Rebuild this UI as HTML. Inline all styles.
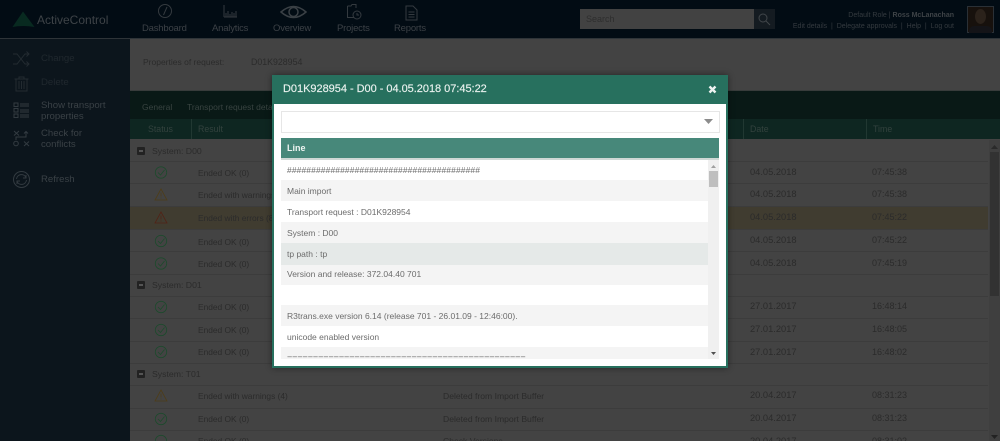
<!DOCTYPE html>
<html><head><meta charset="utf-8">
<style>
html,body{margin:0;padding:0;width:1000px;height:441px;overflow:hidden;background:#434343;font-family:"Liberation Sans",sans-serif;}
.a{position:absolute;white-space:nowrap;}
.t{position:absolute;white-space:nowrap;font-size:8.4px;line-height:12px;color:#2b2b2b;filter:blur(.25px);}
.d{font-size:9.3px;}
.nav{position:absolute;white-space:nowrap;font-size:9.5px;line-height:14px;top:22px;color:#3c4146;letter-spacing:-.2px;}
.sb{position:absolute;white-space:nowrap;font-size:9.6px;line-height:10.5px;color:#3a4146;}
.sep{position:absolute;left:130px;width:858px;height:1px;background:#3c3c3c;}
.m{position:absolute;left:287px;white-space:nowrap;font-size:8.5px;line-height:12px;color:#6c6c6c;}
svg{position:absolute;overflow:visible;}
</style></head><body>
<div style="position:relative;width:1000px;height:441px;overflow:hidden;background:#434343">

<!-- header -->
<div class="a" style="left:0;top:0;width:1000px;height:38px;background:#020c14"></div>
<div class="a" style="left:0;top:38px;width:1000px;height:1px;background:#2e3438"></div>
<svg style="left:12px;top:11px" width="23" height="17"><path d="M11 0.5 L22.5 16 Q11 14 0.5 16 Z" fill="#082a20"/></svg>
<div class="a" style="left:37px;top:12px;font-size:12px;line-height:16px;color:#3e4347">ActiveControl</div>
<svg style="left:157px;top:3px" width="18" height="18" fill="none" stroke="#343a3f" stroke-width="1"><circle cx="8" cy="8" r="6.5" fill="none"/><path fill="none" d="M10 4 L6.5 12"/></svg>
<svg style="left:223px;top:4px" width="16" height="16" fill="none" stroke="#343a3f" stroke-width="1"><path fill="none" d="M1 1V13M1 13H14M3 13V9M5 13V7M7 13V10M9 13V8M11 13V9M13 13V7"/></svg>
<svg style="left:280px;top:4px" width="27" height="16" fill="none" stroke="#3a4045" stroke-width="1.5"><path fill="none" d="M1 8 Q13.500 -3 26 8 Q13.500 19 1 8 Z"/><circle cx="13.500" cy="8" r="4.500" fill="none"/></svg>
<svg style="left:346px;top:3px" width="17" height="18" fill="none" stroke="#343a3f" stroke-width="1"><path fill="none" d="M1.500 3H5L6 1.500H10V5M1.500 3V14.500H8"/><circle cx="11" cy="12" r="4" fill="none"/><path fill="none" d="M11 10V12H13"/></svg>
<svg style="left:405px;top:5px" width="13" height="16" fill="none" stroke="#343a3f" stroke-width="1"><path fill="none" d="M1 1H8L12 5V15H1ZM3.500 7H9.500M3.500 9.500H9.500M3.500 12H9.500"/></svg>
<div class="nav" style="left:142px">Dashboard</div>
<div class="nav" style="left:212px">Analytics</div>
<div class="nav" style="left:273px">Overview</div>
<div class="nav" style="left:337px">Projects</div>
<div class="nav" style="left:394px">Reports</div>

<div class="a" style="left:580px;top:9px;width:174px;height:20px;background:#424242"></div>
<div class="a" style="left:586px;top:13px;font-size:9px;line-height:12px;color:#2e2e2e">Search</div>
<div class="a" style="left:754px;top:9px;width:21px;height:20px;background:#141b21"></div>
<svg style="left:758px;top:13px" width="13" height="13" fill="none" stroke="#41464a" stroke-width="1"><circle cx="5" cy="5" r="4" fill="none"/><path fill="none" d="M8 8L12 12"/></svg>
<div class="a" style="right:46px;top:10px;font-size:7px;line-height:11px;color:#343a3f">Default Role | <b style="color:#3e4347">Ross McLanachan</b></div>
<div class="a" style="right:46px;top:21px;font-size:7px;line-height:11px;color:#343a3f">Edit details &nbsp;|&nbsp; Delegate approvals &nbsp;|&nbsp; Help &nbsp;|&nbsp; Log out</div>
<div class="a" style="left:967px;top:6px;width:27px;height:27px;background:#17110d;outline:1px solid #2a3036;outline-offset:-1px;overflow:hidden">
<div class="a" style="left:8px;top:3px;width:11px;height:15px;border-radius:50%;background:#2b221b"></div>
<div class="a" style="left:2px;top:20px;width:23px;height:8px;background:#141418;border-radius:5px 5px 0 0"></div>
</div>

<!-- sidebar -->
<div class="a" style="left:0;top:39px;width:130px;height:402px;background:#0c151c"></div>
<svg style="left:13px;top:51px" width="17" height="16" fill="none" stroke="#232b31" stroke-width="1"><path fill="none" d="M0 3H4L12 13H16M0 13H4L12 3H16M13.500 0.500L16 3L13.500 5.500M13.500 10.500L16 13L13.500 15.500"/></svg>
<svg style="left:14px;top:76px" width="15" height="16" fill="none" stroke="#232b31" stroke-width="1"><path fill="none" d="M0.500 3H14.500M5 3V1H10V3M2 3V15H13V3M5 5V13M7.500 5V13M10 5V13"/></svg>
<svg style="left:13px;top:102px" width="17" height="16" fill="none" stroke="#333b41" stroke-width="1"><path fill="none" d="M1 1H5V4.500H1ZM1 6.500H5V10H1ZM1 12H5V15.500H1ZM7 2H16M7 4H16M7 8H16M7 10H16M7 13H16M7 15H16"/></svg>
<svg style="left:13px;top:130px" width="17" height="18" fill="none" stroke="#333b41" stroke-width="1"><path fill="none" d="M1 1L6 5.500M6 1L1 5.500M11 16L16 11.500M16 16L11 11.500M3 10V7H13V1.500M11 3.500L13 1.500L15 3.500"/><circle cx="3" cy="13.500" r="2.300" fill="none"/></svg>
<svg style="left:13px;top:171px" width="17" height="17" fill="none" stroke="#333b41" stroke-width="1"><circle cx="8.500" cy="8.500" r="8" fill="none"/><path fill="none" d="M3.500 8A5 5 0 0 1 13 6.500M13.500 9A5 5 0 0 1 4 10.500M13 4V7H10M4 13V10H7"/></svg>
<div class="sb" style="left:41px;top:54px;color:#20282e">Change</div>
<div class="sb" style="left:41px;top:78px;color:#20282e">Delete</div>
<div class="sb" style="left:41px;top:101px">Show transport<br>properties</div>
<div class="sb" style="left:41px;top:129px">Check for<br>conflicts</div>
<div class="sb" style="left:41px;top:175px">Refresh</div>

<!-- page head -->
<div class="t" style="left:143px;top:56px;font-size:8.5px">Properties of request:</div>
<div class="t" style="left:251px;top:56px;font-size:8.8px">D01K928954</div>
<div class="a" style="left:130px;top:90px;width:870px;height:1px;background:#383c3b"></div>
<div class="a" style="left:130px;top:91px;width:870px;height:28px;background:#091916"></div>
<div class="t" style="left:142px;top:101px;color:#384340;font-size:8.5px">General</div>
<div class="t" style="left:187px;top:101px;color:#384340;font-size:8.5px">Transport request details</div>
<div class="a" style="left:130px;top:119px;width:870px;height:20px;background:#0e2621"></div>
<div class="a" style="left:191px;top:119px;width:1px;height:20px;background:#213832"></div>
<div class="a" style="left:743px;top:119px;width:1px;height:20px;background:#213832"></div>
<div class="a" style="left:866px;top:119px;width:1px;height:20px;background:#213832"></div>
<div class="t" style="left:148px;top:123px;color:#33423e;font-size:8.8px">Status</div>
<div class="t" style="left:198px;top:123px;color:#33423e;font-size:8.8px">Result</div>
<div class="t" style="left:750px;top:123px;color:#33423e;font-size:8.8px">Date</div>
<div class="t" style="left:873px;top:123px;color:#33423e;font-size:8.8px">Time</div>

<!-- table -->
<div class="a" style="left:130px;top:207px;width:858px;height:22px;background:#403c30"></div>
<div class="a" style="left:989px;top:140px;width:11px;height:301px;background:#3f3f3f"></div>
<div class="a" style="left:990px;top:152px;width:9px;height:144px;background:#323232"></div>
<svg style="left:991px;top:145px" width="7" height="4"><path d="M0 4L3.500 0L7 4Z" fill="#2a2a2a"/></svg>
<svg style="left:991px;top:435px" width="7" height="4"><path d="M0 0L3.500 4L7 0Z" fill="#222"/></svg>

<div class="sep" style="top:161px"></div><div class="sep" style="top:183px"></div><div class="sep" style="top:206px"></div><div class="sep" style="top:229px"></div><div class="sep" style="top:251px"></div><div class="sep" style="top:274px"></div><div class="sep" style="top:296px"></div><div class="sep" style="top:318px"></div><div class="sep" style="top:341px"></div><div class="sep" style="top:363px"></div><div class="sep" style="top:385px"></div><div class="sep" style="top:408px"></div><div class="sep" style="top:430px"></div>

<div class="a" style="left:137px;top:147px;width:8px;height:8px;background:#222;border-radius:1px"></div><div class="a" style="left:139px;top:150px;width:4px;height:2px;background:#555"></div>
<div class="a" style="left:137px;top:281px;width:8px;height:8px;background:#222;border-radius:1px"></div><div class="a" style="left:139px;top:284px;width:4px;height:2px;background:#555"></div>
<div class="a" style="left:137px;top:370px;width:8px;height:8px;background:#222;border-radius:1px"></div><div class="a" style="left:139px;top:373px;width:4px;height:2px;background:#555"></div>
<div class="t" style="left:152px;top:145px;font-size:8.7px">System: D00</div>
<div class="t" style="left:152px;top:279px;font-size:8.7px">System: D01</div>
<div class="t" style="left:152px;top:368px;font-size:8.7px">System: T01</div>

<svg style="left:0;top:0" width="1000" height="441">
<g stroke="#1c4a2c" stroke-width=".8" fill="none">
<circle fill="none" cx="161" cy="172.500" r="5.700"/><path fill="none" d="M158 172.500L160.500 175L164.500 170"/>
<circle fill="none" cx="161" cy="241" r="5.700"/><path fill="none" d="M158 241L160.500 243.500L164.500 238.500"/>
<circle fill="none" cx="161" cy="263.500" r="5.700"/><path fill="none" d="M158 263.500L160.500 266L164.500 261"/>
<circle fill="none" cx="161" cy="307" r="5.700"/><path fill="none" d="M158 307L160.500 309.500L164.500 304.500"/>
<circle fill="none" cx="161" cy="330" r="5.700"/><path fill="none" d="M158 330L160.500 332.500L164.500 327.500"/>
<circle fill="none" cx="161" cy="352" r="5.700"/><path fill="none" d="M158 352L160.500 354.500L164.500 349.500"/>
<circle fill="none" cx="161" cy="419" r="5.700"/><path fill="none" d="M158 419L160.500 421.500L164.500 416.500"/>
<circle fill="none" cx="161" cy="441" r="5.700"/>
</g>
<g stroke="#4e3d18" stroke-width=".8" fill="none">
<path fill="none" d="M161 189L167 200H155Z"/><path fill="none" d="M161 192.500V196.500M161 197.500V198.500"/>
<path fill="none" d="M161 390L167 401H155Z"/><path fill="none" d="M161 393.500V397.500M161 398.500V399.500"/>
</g>
<g stroke="#522316" stroke-width=".8" fill="none">
<path fill="none" d="M161 212L167 223H155Z"/><path fill="none" d="M161 215.500V219.500M161 220.500V221.500"/>
</g>
</svg>

<div class="t" style="left:198px;top:167px">Ended OK (0)</div>
<div class="t" style="left:198px;top:189px">Ended with warnings (4)</div>
<div class="t" style="left:198px;top:212px">Ended with errors (8)</div>
<div class="t" style="left:198px;top:236px">Ended OK (0)</div>
<div class="t" style="left:198px;top:258px">Ended OK (0)</div>
<div class="t" style="left:198px;top:301px">Ended OK (0)</div>
<div class="t" style="left:198px;top:324px">Ended OK (0)</div>
<div class="t" style="left:198px;top:346px">Ended OK (0)</div>
<div class="t" style="left:198px;top:390px">Ended with warnings (4)</div>
<div class="t" style="left:198px;top:413px">Ended OK (0)</div>
<div class="t" style="left:198px;top:435px">Ended OK (0)</div>
<div class="t" style="left:443px;top:390px;font-size:8.6px">Deleted from Import Buffer</div>
<div class="t" style="left:443px;top:413px;font-size:8.6px">Deleted from Import Buffer</div>
<div class="t" style="left:443px;top:435px;font-size:8.6px">Check Versions</div>

<div class="t d" style="left:750px;top:166px">04.05.2018</div><div class="t" style="left:872px;top:166px;font-size:9px">07:45:38</div>
<div class="t d" style="left:750px;top:188px">04.05.2018</div><div class="t" style="left:872px;top:188px;font-size:9px">07:45:38</div>
<div class="t d" style="left:750px;top:211px">04.05.2018</div><div class="t" style="left:872px;top:211px;font-size:9px">07:45:22</div>
<div class="t d" style="left:750px;top:234px">04.05.2018</div><div class="t" style="left:872px;top:234px;font-size:9px">07:45:22</div>
<div class="t d" style="left:750px;top:257px">04.05.2018</div><div class="t" style="left:872px;top:257px;font-size:9px">07:45:19</div>
<div class="t d" style="left:750px;top:300px">27.01.2017</div><div class="t" style="left:872px;top:300px;font-size:9px">16:48:14</div>
<div class="t d" style="left:750px;top:323px">27.01.2017</div><div class="t" style="left:872px;top:323px;font-size:9px">16:48:05</div>
<div class="t d" style="left:750px;top:346px">27.01.2017</div><div class="t" style="left:872px;top:346px;font-size:9px">16:48:02</div>
<div class="t d" style="left:750px;top:389px">20.04.2017</div><div class="t" style="left:872px;top:389px;font-size:9px">08:31:23</div>
<div class="t d" style="left:750px;top:412px">20.04.2017</div><div class="t" style="left:872px;top:412px;font-size:9px">08:31:23</div>
<div class="t d" style="left:750px;top:435px">20.04.2017</div><div class="t" style="left:872px;top:435px;font-size:9px">08:31:02</div>

<!-- modal -->
<div class="a" style="left:272px;top:75px;width:456px;height:293px;background:#27705e;box-shadow:0 0 6px rgba(0,0,0,.45)"></div>
<div class="a" style="left:274px;top:104px;width:452px;height:262px;background:#fff"></div>
<div class="a" style="left:283px;top:81px;font-size:11px;line-height:16px;color:#e9f1ee;letter-spacing:-.03px;-webkit-text-stroke:.15px #e9f1ee">D01K928954 - D00 - 04.05.2018 07:45:22</div>
<svg style="left:708px;top:85px" width="9" height="9"><path d="M1.500 1.500L7.500 7.500M7.500 1.500L1.500 7.500" stroke="#eef3f1" stroke-width="2.400" fill="none"/></svg>
<div class="a" style="left:281px;top:111px;width:437px;height:20px;border:1px solid #e6e6e6;background:#fff"></div>
<svg style="left:704px;top:119px" width="9" height="5"><path d="M0 0H9L4.500 5Z" fill="#8c8c8c"/></svg>
<div class="a" style="left:281px;top:138px;width:438px;height:20px;background:#47887a"></div>
<div class="a" style="left:281px;top:158px;width:438px;height:2px;background:#cfd8d5"></div>
<div class="a" style="left:287px;top:142px;font-size:9px;font-weight:bold;line-height:12px;color:#eef5f2">Line</div>

<div class="a" style="left:281px;top:180px;width:427px;height:21px;background:#f4f4f4"></div>
<div class="a" style="left:281px;top:222px;width:427px;height:21px;background:#f4f4f4"></div>
<div class="a" style="left:281px;top:243px;width:427px;height:22px;background:#e5e9e8"></div>
<div class="a" style="left:281px;top:265px;width:427px;height:20px;background:#f4f4f4"></div>
<div class="a" style="left:281px;top:305px;width:427px;height:21px;background:#f4f4f4"></div>
<div class="a" style="left:281px;top:347px;width:427px;height:12px;background:#f4f4f4"></div>
<div class="a" style="left:708px;top:160px;width:11px;height:199px;background:#f0f0f0"></div>
<div class="a" style="left:709px;top:171px;width:9px;height:16px;background:#bfbfbf"></div>
<svg style="left:711px;top:165px" width="5" height="3"><path d="M0 3L2.500 0L5 3Z" fill="#a0a0a0"/></svg>
<svg style="left:711px;top:352px" width="5" height="3"><path d="M0 0L2.500 3L5 0Z" fill="#505050"/></svg>

<div class="m" style="top:164px;letter-spacing:.1px">########################################</div>
<div class="m" style="top:185px">Main import</div>
<div class="m" style="top:206px">Transport request : D01K928954</div>
<div class="m" style="top:227px">System : D00</div>
<div class="m" style="top:248px">tp path : tp</div>
<div class="m" style="top:268px">Version and release: 372.04.40 701</div>
<div class="m" style="top:310px">R3trans.exe version 6.14 (release 701 - 26.01.09 - 12:46:00).</div>
<div class="m" style="top:331px">unicode enabled version</div>
<div class="a" style="left:281px;top:351px;width:427px;height:8px;overflow:hidden"><div class="m" style="left:6px;top:1px;font-size:9px;letter-spacing:-.07px">==============================================</div></div>
</div>
</body></html>
